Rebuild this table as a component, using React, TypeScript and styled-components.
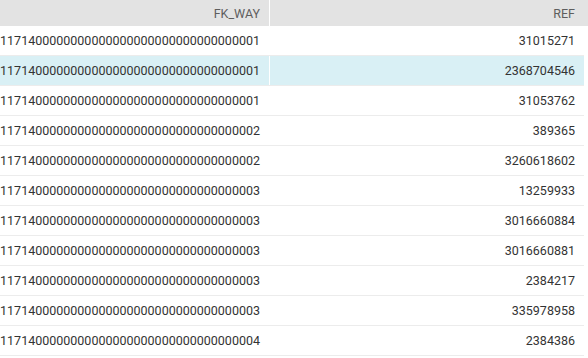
import React from "react";
import styled, { createGlobalStyle } from "styled-components";

type Row = { way: string; ref: string };

const rows: Row[] = [
  { way: "1171400000000000000000000000000000001", ref: "31015271" },
  { way: "1171400000000000000000000000000000001", ref: "2368704546" },
  { way: "1171400000000000000000000000000000001", ref: "31053762" },
  { way: "1171400000000000000000000000000000002", ref: "389365" },
  { way: "1171400000000000000000000000000000002", ref: "3260618602" },
  { way: "1171400000000000000000000000000000003", ref: "13259933" },
  { way: "1171400000000000000000000000000000003", ref: "3016660884" },
  { way: "1171400000000000000000000000000000003", ref: "3016660881" },
  { way: "1171400000000000000000000000000000003", ref: "2384217" },
  { way: "1171400000000000000000000000000000003", ref: "335978958" },
  { way: "1171400000000000000000000000000000004", ref: "2384386" },
];

const SELECTED = 1;

const App: React.FC = () => {
  return (
    <>
      <GlobalStyle />
      <Grid>
        <HeaderRow>
          <HeaderCell $first>FK_WAY</HeaderCell>
          <HeaderCell>REF</HeaderCell>
        </HeaderRow>
        {rows.map((row, i) => (
          <DataRow key={i} $selected={i === SELECTED}>
            <Cell $first>
              <span>{row.way}</span>
            </Cell>
            <Cell>
              <span>{row.ref}</span>
            </Cell>
          </DataRow>
        ))}
      </Grid>
    </>
  );
};

export default App;

const GlobalStyle = createGlobalStyle`
  html, body {
    margin: 0;
    padding: 0;
    background: #ffffff;
    overflow: hidden;
  }
  body {
    font-family: Roboto, "Liberation Sans", sans-serif;
    font-size: 12.5px;
    color: #333333;
  }
`;

const Grid = styled.div`
  width: 588px;
  height: 358px;
  overflow: hidden;
  display: flex;
  flex-direction: column;
`;

const HeaderRow = styled.div`
  display: grid;
  grid-template-columns: 270px 314px 4px;
  height: 26px;
  flex: none;
  background: #e3e3e3;
`;

const HeaderCell = styled.div<{ $first?: boolean }>`
  display: flex;
  align-items: center;
  justify-content: flex-end;
  padding-right: 9px;
  color: #5e5e5e;
  font-size: 12.5px;
  border-right: ${(p) => (p.$first ? "1px solid #ffffff" : "none")};
`;

const DataRow = styled.div<{ $selected?: boolean }>`
  display: grid;
  grid-template-columns: 270px 314px;
  height: 29px;
  flex: none;
  width: 584px;
  background: ${(p) => (p.$selected ? "#d9f0f5" : "#ffffff")};
  border-bottom: 1px solid #ececec;
`;

const Cell = styled.div<{ $first?: boolean }>`
  display: flex;
  align-items: center;
  justify-content: flex-end;
  overflow: hidden;
  white-space: nowrap;
  padding-right: 9px;
  border-right: ${(p) => (p.$first ? "1px solid #ffffff" : "none")};

  > span {
    flex: none;
  }
`;
